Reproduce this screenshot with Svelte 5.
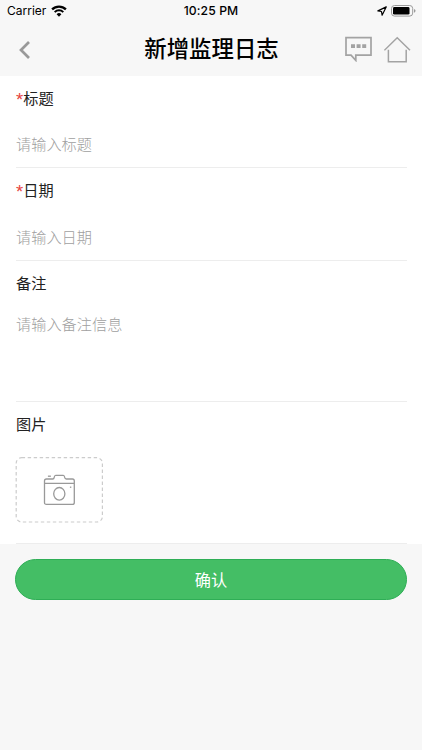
<script>
    let title = $state("");
    let date = $state("");
    let remark = $state("");
</script>

<div class="Page">
    <header>
        <div class="statusBar">
            <div class="carrier">
                <span>Carrier</span>
                <svg width="16" height="12" viewBox="0 0 16 12">
                    <path d="M1.1 4.4a9.8 9.8 0 0 1 13.8 0" fill="none" stroke="#000" stroke-width="2.3"/>
                    <path d="M3.7 7.1a6.1 6.1 0 0 1 8.6 0" fill="none" stroke="#000" stroke-width="2"/>
                    <path d="M8 11.7l-2.4-2.4a3.4 3.4 0 0 1 4.8 0z"/>
                </svg>
            </div>
            <span class="time">10:25 PM</span>
            <div class="indicators">
                <svg width="10" height="10" viewBox="0 0 10 10">
                    <path d="M9.2.9L.9 4.9l3.6.6.6 3.7z" fill="none" stroke="#000" stroke-width="1.2" stroke-linejoin="round"/>
                </svg>
                <svg width="25" height="12" viewBox="0 0 25 12">
                    <rect x=".5" y=".5" width="21.2" height="10.6" rx="3" fill="none" stroke="#9a9a9a"/>
                    <rect x="2" y="2" width="16.5" height="7.6" rx="1.4"/>
                    <path d="M23 3.9q1.5.5 1.5 1.9T23 7.8z" fill="#9a9a9a"/>
                </svg>
            </div>
        </div>

        <nav>
            <button class="iconButton" aria-label="返回">
                <svg width="12" height="20" viewBox="0 0 12 20">
                    <path d="M10 3L2 11l8 8" fill="none" stroke="#999" stroke-width="2.7"/>
                </svg>
            </button>
            <h1>新增监理日志</h1>
            <div class="actions">
                <button class="iconButton" aria-label="消息">
                    <svg width="27" height="26" viewBox="0 0 27 26">
                        <path d="M1 1.6h25v17.6H10.8v5.2L6 19.2H1z" fill="none" stroke="#a3a3a3" stroke-width="1.7"/>
                        <path d="M6 8.2h4v3.8H6zM11.6 8.2h4v3.8h-4zM17.2 8.2h4v3.8h-4z" fill="#a3a3a3"/>
                    </svg>
                </button>
                <button class="iconButton" aria-label="首页">
                    <svg width="28" height="28" viewBox="0 0 28 28">
                        <path d="M.4 15.3L13.2 2.8 26 15.3M4.4 14.8v12h17.8v-12" fill="none" stroke="#a3a3a3" stroke-width="1.5"/>
                    </svg>
                </button>
            </div>
        </nav>
    </header>

    <form>
        <div class="field">
            <label for="title"><span class="required">*</span>标题</label>
            <input id="title" type="text" placeholder="请输入标题" bind:value={title}>
        </div>

        <div class="field">
            <label for="date"><span class="required">*</span>日期</label>
            <input id="date" type="text" placeholder="请输入日期" bind:value={date}>
        </div>

        <div class="field remark">
            <label for="remark">备注</label>
            <textarea id="remark" placeholder="请输入备注信息" bind:value={remark}></textarea>
        </div>

        <div class="field pictures">
            <p class="label">图片</p>
            <button type="button" class="upload" aria-label="图片">
                <svg width="88" height="66" viewBox="0 0 88 66">
                    <rect x="1.2" y=".7" width="86.2" height="64.3" rx="5.5" fill="none" stroke="#ccc" stroke-width="1.2" stroke-dasharray="3.4 2.6"/>
                </svg>
                <svg width="32" height="32" viewBox="-.5 0 32 32" fill="none" stroke="#999" stroke-width="1.3">
                    <path d="M1 9.3V7q0-2 2-2h6.2q1.3 0 1.5-1.6.3-2 1.5-2h7.6q1.1 0 1.4 2 .3 1.6 1.6 1.6H29q1.8 0 1.8 2v21.4q0 2-1.8 2H3q-2 0-2-2zM1 9.3h29.8"/>
                    <ellipse cx="15.8" cy="19.8" rx="5.6" ry="6.3"/>
                    <path d="M4.4 2.2h3"/>
                    <path d="M26.4 13.2h1.4"/>
                </svg>
            </button>
        </div>
    </form>

    <div class="submit">
        <button class="confirm">确认</button>
    </div>
</div>

<style>
    :global(body){
        background: #f7f7f7;
    }

    .Page{
        min-height: 750px;
        background: #f7f7f7;
        color: #222;
        font-family: "Noto Sans CJK SC", sans-serif;
        font-size: 15.2px;
    }

    button{
        padding: 0;
        font-family: inherit;
        background: none;
        border: none;
        cursor: pointer;
    }

    svg{
        display: block;
    }

    header{
        height: 76px;
        color: #000;
    }

    .statusBar{
        display: grid;
        grid-template-columns: 1fr auto 1fr;
        align-items: center;
        height: 21px;
        padding: 0 6px 0 7px;
        font-family: Inter, "Liberation Sans", sans-serif;
        font-size: 12px;
    }

    .carrier{
        display: flex;
        align-items: center;
        gap: 5px;
    }

    .time{
        margin-right: 1px;
        font-size: 12.2px;
        font-weight: 500;
        letter-spacing: .1px;
    }

    .indicators{
        display: flex;
        align-items: center;
        justify-content: flex-end;
        gap: 4px;
    }

    nav{
        display: grid;
        grid-template-columns: 1fr auto 1fr;
        align-items: center;
        height: 55px;
        padding: 0 10px 0 19px;
    }

    h1{
        margin: 0 8px 3px 0;
        font-size: 22.4px;
        font-weight: 500;
        line-height: 52px;
    }

    .actions{
        display: flex;
        align-items: center;
        justify-content: flex-end;
        gap: 12px;
    }

    form{
        height: 468px;
        background: #fff;
    }

    .field{
        display: flex;
        flex-direction: column;
        box-sizing: border-box;
        height: 93px;
        margin: 0 15px 0 16px;
        padding-top: 10px;
        border-bottom: 1px solid #ededed;
    }

    .field:first-child{
        height: 92px;
    }

    .field:first-child input{
        margin-top: 24px;
    }

    label, .label{
        margin: 0;
        line-height: 22px;
    }

    .required{
        color: #e64340;
        font-family: "Liberation Sans", sans-serif;
        font-size: 18.5px;
        line-height: 1;
        vertical-align: -2px;
    }

    input, textarea{
        width: 100%;
        padding: 0;
        color: #222;
        font-family: inherit;
        font-size: 15.2px;
        font-weight: 300;
        line-height: 22px;
        background: none;
        border: none;
        outline: none;
        resize: none;
    }

    label{
        height: 22px;
    }

    input{
        height: 22px;
        margin-top: 25px;
    }

    textarea{
        height: 66px;
        margin-top: 19px;
    }

    ::placeholder{
        color: #a0a0a0;
        opacity: 1;
    }

    .remark{
        height: 141px;
    }

    .pictures{
        height: 142px;
    }

    .upload{
        display: grid;
        place-items: center;
        width: 88px;
        height: 66px;
        margin: 23px 0 0 -1px;
    }

    .upload svg{
        grid-area: 1 / 1;
    }

    .submit{
        padding: 15px 15px 0;
    }

    .confirm{
        width: 100%;
        height: 41px;
        padding-bottom: 2px;
        color: #fff;
        font-size: 16.2px;
        background: #44be65;
        border: 1px solid #2fae56;
        border-radius: 21px;
    }
</style>
